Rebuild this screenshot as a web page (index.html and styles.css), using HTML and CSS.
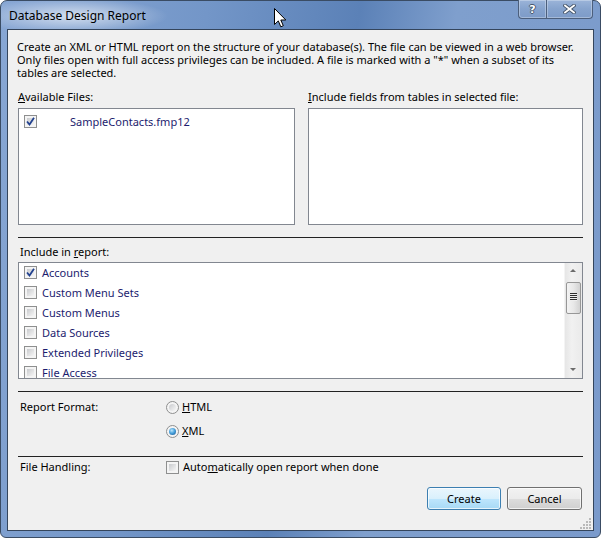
FILE: index.html
```html
<!DOCTYPE html>
<html lang="en">
  <head>
    <meta charset="UTF-8" />
    <title>Database Design Report</title>
    <link rel="stylesheet" href="styles.css">
  </head>

  <body>
    <div class="window">
      <div class="titlebar">
        <span class="title">Database Design Report</span>
        <div class="caption-buttons">
          <span class="cap-btn help">?</span>
          <span class="cap-btn close">
            <svg width="13" height="10" viewBox="0 0 13 10">
              <path d="M2 1.5 L11 8.5 M11 1.5 L2 8.5" stroke="#46566b" stroke-width="3.6" stroke-linecap="square" />
              <path d="M2 1.5 L11 8.5 M11 1.5 L2 8.5" stroke="#fff" stroke-width="1.7" stroke-linecap="square" />
            </svg>
          </span>
        </div>
      </div>

      <div class="client">
        <div class="intro">
          <div class="intro-line">Create an XML or HTML report on the structure of your database(s). The file can be viewed in a web browser.</div>
          <div class="intro-line">Only files open with full access privileges can be included. A file is marked with a "*" when a subset of its</div>
          <div class="intro-line">tables are selected.</div>
        </div>

        <div class="files">
          <div class="files-col">
            <div class="label"><u>A</u>vailable Files:</div>
            <div class="listbox file-list">
              <div class="file-row">
                <span class="check checked">
                  <svg width="9" height="9" viewBox="0 0 9 9"><path d="M1 4.5 L3.5 7.5 L8 0.8" fill="none" stroke="#22418f" stroke-width="1.8" /></svg>
                </span>
                <span class="file-name">SampleContacts.fmp12</span>
              </div>
            </div>
          </div>
          <div class="files-col">
            <div class="label"><u>I</u>nclude fields from tables in selected file:</div>
            <div class="listbox file-list"></div>
          </div>
        </div>

        <div class="sep"></div>

        <div class="label report-label">Include in <u>r</u>eport:</div>
        <div class="listbox report-list">
          <div class="rows">
            <div class="row">
              <span class="check checked">
                <svg width="9" height="9" viewBox="0 0 9 9"><path d="M1 4.5 L3.5 7.5 L8 0.8" fill="none" stroke="#22418f" stroke-width="1.8" /></svg>
              </span>
              Accounts
            </div>
            <div class="row"><span class="check"></span>Custom Menu Sets</div>
            <div class="row"><span class="check"></span>Custom Menus</div>
            <div class="row"><span class="check"></span>Data Sources</div>
            <div class="row"><span class="check"></span>Extended Privileges</div>
            <div class="row"><span class="check"></span>File Access</div>
          </div>
          <div class="scrollbar">
            <span class="arrow up"></span>
            <span class="thumb"><span class="grip"></span></span>
            <span class="arrow down"></span>
          </div>
        </div>

        <div class="sep"></div>

        <div class="option-group format">
          <div class="group-label">Report Format:</div>
          <div class="options">
            <div class="option"><span class="radio"></span><span><u>H</u>TML</span></div>
            <div class="option"><span class="radio checked"></span><span><u>X</u>ML</span></div>
          </div>
        </div>

        <div class="sep"></div>

        <div class="option-group handling">
          <div class="group-label">File Handling:</div>
          <div class="options">
            <div class="option"><span class="check"></span><span>Auto<u>m</u>atically open report when done</span></div>
          </div>
        </div>

        <div class="buttons">
          <button class="button default">Create</button>
          <button class="button">Cancel</button>
        </div>

        <div class="grip-corner">
          <svg width="12" height="12" viewBox="0 0 12 12" fill="#b9b9b9">
            <rect x="9" y="1" width="2" height="2" />
            <rect x="6" y="4" width="2" height="2" /><rect x="9" y="4" width="2" height="2" />
            <rect x="3" y="7" width="2" height="2" /><rect x="6" y="7" width="2" height="2" /><rect x="9" y="7" width="2" height="2" />
            <rect x="0" y="10" width="2" height="2" /><rect x="3" y="10" width="2" height="2" /><rect x="6" y="10" width="2" height="2" /><rect x="9" y="10" width="2" height="2" />
          </svg>
        </div>
      </div>

      <svg class="cursor" width="13" height="21" viewBox="0 0 13 21">
        <path d="M0.5 0.5 L0.5 16.5 L4.3 12.9 L6.8 18.8 L9.3 17.7 L6.8 12 L11.8 12 Z" fill="#fff" stroke="#000" stroke-width="1" />
      </svg>
    </div>
  </body>
</html>
```

FILE: styles.css
```css
body {
  margin: 0;
  padding: 0;
  background-color: #ffffff;
  font-family: "Noto Sans", "Open Sans", sans-serif;
  font-size: 11px;
  color: #000;
}

.window {
  position: relative;
  box-sizing: border-box;
  width: 601px;
  height: 538px;
  border: 1px solid #3a4c64;
  border-radius: 7px 7px 6px 6px;
  padding: 0 6px 6px 6px;
  display: flex;
  flex-direction: column;
  background:
    radial-gradient(ellipse 95px 18px at 72px 15px, rgba(255, 255, 255, 0.65), rgba(255, 255, 255, 0) 100%),
    linear-gradient(100deg, #88a7d4 0%, #7396c8 30%, #5b81b7 52%, #7f9fcd 66%, #7a9acb 100%);
}

.titlebar {
  height: 28px;
  display: flex;
  align-items: flex-start;
}

.title {
  padding-left: 2px;
  margin-top: 6px;
  font-size: 12px;
  color: #000;
}

.caption-buttons {
  margin-left: auto;
  margin-right: 1px;
  display: flex;
  height: 19px;
  margin-top: -1px;
}

.cap-btn {
  box-sizing: border-box;
  height: 19px;
  display: flex;
  align-items: center;
  justify-content: center;
  border: 1px solid #4c5f7c;
  border-top: none;
  background: linear-gradient(#9bb4d9, #86a3cd 50%, #7d9bc8);
  box-shadow: inset 0 0 0 1px rgba(255, 255, 255, 0.3);
}

.help {
  width: 28px;
  border-radius: 0 0 0 4px;
  border-right: none;
  font-family: "DejaVu Sans", sans-serif;
  font-weight: bold;
  font-size: 11px;
  color: #fff;
  text-shadow: 1px 0 #46566b, -1px 0 #46566b, 0 1px #46566b, 0 -1px #46566b;
}

.close {
  width: 47px;
  border-radius: 0 0 4px 0;
}

.client {
  position: relative;
  flex: 1;
  border: 1px solid #34455c;
  background-color: #f0f0f0;
  padding: 10px 10px 0 10px;
}

.intro {
  margin-left: -1px;
}

.intro-line {
  height: 13px;
  line-height: 13px;
  white-space: nowrap;
}

.label {
  line-height: 14px;
  white-space: nowrap;
}

.files {
  display: grid;
  grid-template-columns: 277px 275px;
  column-gap: 13px;
  margin-top: 11px;
}

.files .label {
  margin-bottom: 4px;
}

.listbox {
  box-sizing: border-box;
  border: 1px solid #828790;
  background-color: #fff;
}

.file-list {
  height: 117px;
}

.file-row {
  display: flex;
  align-items: center;
  padding: 5px 0 0 5px;
}

.file-name {
  margin-left: 33px;
  color: #1c1c6e;
}

.sep {
  border-top: 1px solid #222;
  margin-top: 12px;
}

.report-label {
  margin-top: 7px;
  margin-bottom: 3px;
  padding-left: 2px;
}

.report-list {
  height: 117px;
  display: flex;
  overflow: hidden;
}

.rows {
  flex: 1;
}

.row {
  height: 20px;
  display: flex;
  align-items: center;
  padding-left: 5px;
  color: #1c1c6e;
}

.row:first-child {
  margin-top: -1px;
}

.row .check {
  margin-right: 5px;
}

.check {
  position: relative;
  box-sizing: border-box;
  width: 13px;
  height: 13px;
  border: 1px solid #8e8f8f;
  background-color: #f4f4f4;
  flex: none;
}

.check::before {
  content: "";
  position: absolute;
  left: 2px;
  top: 2px;
  right: 2px;
  bottom: 2px;
  background: linear-gradient(135deg, #c9cbce, #f5f5f5);
}

.check svg {
  position: absolute;
  left: 1px;
  top: 1px;
}

.scrollbar {
  width: 17px;
  position: relative;
  background: linear-gradient(90deg, #e6e6e6, #f1f1f1 40%, #eaeaea);
  border-left: 1px solid #f4f4f4;
}

.arrow {
  position: absolute;
  left: 5px;
  width: 0;
  height: 0;
  border-left: 3px solid transparent;
  border-right: 3px solid transparent;
}

.arrow.up {
  top: 6px;
  border-bottom: 3px solid #6b6b6b;
}

.arrow.down {
  bottom: 7px;
  border-top: 3px solid #6b6b6b;
}

.thumb {
  position: absolute;
  left: 1px;
  top: 19px;
  width: 13px;
  height: 30px;
  border: 1px solid #979797;
  border-radius: 2px;
  background: linear-gradient(90deg, #f3f3f3, #e8e8e8 50%, #d2d2d2);
}

.grip {
  position: absolute;
  left: 3px;
  top: 10px;
  width: 7px;
  height: 8px;
  background: repeating-linear-gradient(#2e2e2e 0, #2e2e2e 1px, #eeeeee 1px, #eeeeee 2px);
}

.option-group {
  display: flex;
  padding-left: 2px;
}

.group-label {
  width: 146px;
  line-height: 14px;
}

.format {
  margin-top: 8px;
  height: 44px;
}

.options {
  display: flex;
  flex-direction: column;
  row-gap: 10px;
}

.option {
  display: flex;
  align-items: center;
  line-height: 14px;
}

.option .check {
  margin-right: 4px;
}

.radio {
  position: relative;
  box-sizing: border-box;
  width: 13px;
  height: 13px;
  border-radius: 50%;
  border: 1px solid #8e8f8f;
  background: #f4f4f4;
  margin-right: 3px;
  flex: none;
}

.radio::before {
  content: "";
  position: absolute;
  left: 2px;
  top: 2px;
  right: 2px;
  bottom: 2px;
  border-radius: 50%;
  background: linear-gradient(135deg, #c9cbce, #f7f7f7);
}

.radio.checked::before {
  background: radial-gradient(circle at 40% 35%, #bfe6fb 0, #4aa3dd 45%, #134f8d 100%);
}

.handling {
  margin-top: 3px;
}

.buttons {
  display: flex;
  justify-content: flex-end;
  column-gap: 6px;
  margin-top: 13px;
  padding-right: 1px;
}

.button {
  box-sizing: border-box;
  width: 75px;
  height: 23px;
  font-family: "Noto Sans", "Open Sans", sans-serif;
  font-size: 11px;
  color: #000;
  border: 1px solid #707070;
  border-radius: 3px;
  background: linear-gradient(#f2f2f2, #ebebeb 50%, #dddddd 51%, #cfcfcf);
  box-shadow: inset 0 0 0 1px rgba(255, 255, 255, 0.7);
  padding: 0;
}

.button.default {
  width: 74px;
  border-color: #3c7fb1;
  background: linear-gradient(#eaf6fd, #d9f0fc 50%, #bee6fd 51%, #a7d9f5);
}

.grip-corner {
  position: absolute;
  right: 1px;
  bottom: 1px;
  display: flex;
}

.cursor {
  position: absolute;
  left: 273px;
  top: 7px;
}
```
